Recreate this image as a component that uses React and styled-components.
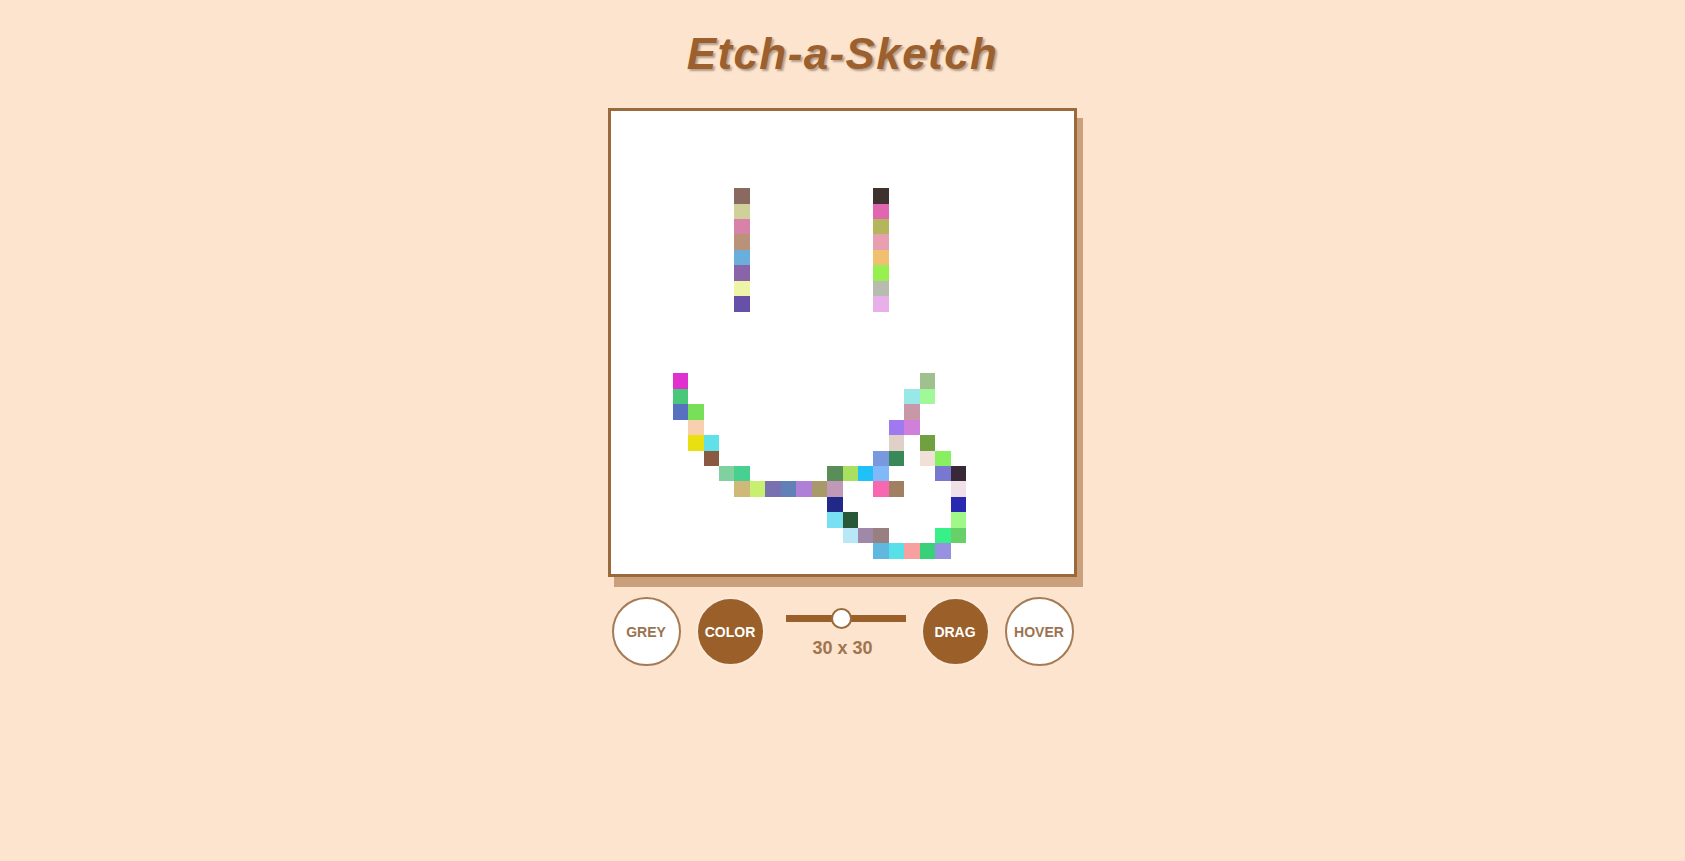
import React, { useState } from 'react'
import styled, { createGlobalStyle } from 'styled-components'

const GlobalStyle = createGlobalStyle`
  html, body {
    margin: 0;
    padding: 0;
    background: #fce4cf;
    font-family: "Liberation Sans", Arial, sans-serif;
  }
`

const Page = styled.div`
  display: flex;
  flex-direction: column;
  align-items: center;
  min-height: 100vh;
`

const Title = styled.h1`
  margin: 30px 0 30px;
  font-size: 44px;
  line-height: 48px;
  letter-spacing: 1.4px;
  font-style: italic;
  font-weight: bold;
  color: #9b602d;
  text-shadow: 2px 2px 2px rgba(70, 55, 40, 0.4);
`

const Board = styled.div`
  display: grid;
  grid-template-columns: repeat(${(p) => p.$size}, 1fr);
  grid-template-rows: repeat(${(p) => p.$size}, 1fr);
  width: 463px;
  height: 463px;
  background: #fff;
  border: 3px solid #9b6a3c;
  box-shadow: 6px 10px 0 #c9a07b;
`

const Cell = styled.div`
  background: ${(p) => p.$color || 'transparent'};
`

const Controls = styled.div`
  display: flex;
  align-items: center;
  gap: 15px;
  margin-top: 20px;
`

const RoundButton = styled.button`
  width: 69px;
  height: 69px;
  border-radius: 50%;
  padding: 0;
  font-family: inherit;
  font-size: 14px;
  font-weight: bold;
  cursor: pointer;
  border: 2px solid ${(p) => (p.$active ? '#fbe9da' : '#a57b55')};
  background: ${(p) => (p.$active ? '#9b5f2a' : '#fff')};
  color: ${(p) => (p.$active ? '#fff' : '#9b7350')};
`

const SliderGroup = styled.div`
  display: flex;
  flex-direction: column;
  align-items: center;
  gap: 16px;
  padding-top: 10px;
  margin-left: 6px;
  width: 120px;
`

const Range = styled.input`
  -webkit-appearance: none;
  appearance: none;
  width: 120px;
  height: 7px;
  margin: 0;
  background: #9b5f2a;
  outline: none;

  &::-webkit-slider-thumb {
    -webkit-appearance: none;
    appearance: none;
    width: 21px;
    height: 21px;
    border-radius: 50%;
    background: #fff;
    border: 2px solid #9b6a3c;
    box-sizing: border-box;
    cursor: pointer;
  }
`

const SizeLabel = styled.span`
  margin-right: 6px;
  font-size: 18px;
  font-weight: bold;
  color: #a0744c;
`

const PAINTED = [
  // left eye
  [8, 5, '#8a6a60'], [8, 6, '#cfd09a'], [8, 7, '#d882aa'], [8, 8, '#b8937a'],
  [8, 9, '#6aaedc'], [8, 10, '#8a64a8'], [8, 11, '#eef5a8'], [8, 12, '#6650a8'],
  // right eye
  [17, 5, '#3e322e'], [17, 6, '#e066b0'], [17, 7, '#b5b55e'], [17, 8, '#e8a0b0'],
  [17, 9, '#f0c070'], [17, 10, '#98f050'], [17, 11, '#b8bcb0'], [17, 12, '#e8b0e8'],
  // mouth
  [4, 17, '#e030d0'], [4, 18, '#48c878'], [4, 19, '#5870c0'],
  [5, 19, '#78e058'], [5, 20, '#f8d0b0'], [5, 21, '#e8e010'],
  [6, 21, '#60e0e8'], [6, 22, '#8a5a40'],
  [7, 23, '#80d0a0'], [8, 23, '#48d090'], [8, 24, '#d0b878'],
  [9, 24, '#c8f070'], [10, 24, '#7870b0'], [11, 24, '#6080b8'],
  [12, 24, '#b080d8'], [13, 24, '#a89a68'],
  [14, 23, '#5a8e58'], [14, 24, '#c098b8'], [14, 25, '#202888'], [14, 26, '#78e0f0'],
  [15, 23, '#a8e060'], [15, 26, '#285838'], [15, 27, '#b8e8f8'],
  [16, 23, '#20c0f8'], [16, 27, '#a088a8'],
  [17, 22, '#7898e0'], [17, 23, '#80b8f8'], [17, 24, '#f868b0'],
  [17, 27, '#988080'], [17, 28, '#60b8e0'],
  [18, 20, '#a078f0'], [18, 21, '#e0d0c8'], [18, 22, '#388858'],
  [18, 24, '#a08060'], [18, 28, '#58e0e8'],
  [19, 18, '#98e8e8'], [19, 19, '#c898a8'], [19, 20, '#d080d8'], [19, 28, '#f8a0a0'],
  [20, 17, '#a0c090'], [20, 18, '#a0f898'], [20, 21, '#70a040'],
  [20, 22, '#f0e0d8'], [20, 28, '#38d078'],
  [21, 22, '#88f060'], [21, 23, '#7878d0'], [21, 27, '#38f088'], [21, 28, '#9890e0'],
  [22, 23, '#382838'], [22, 24, '#f0e0e8'], [22, 25, '#2828b0'],
  [22, 26, '#a0f888'], [22, 27, '#68d068'],
]

const GRID = 30
const paintMap = new Map(PAINTED.map(([c, r, color]) => [r * GRID + c, color]))

const App = () => {
  const [size, setSize] = useState(30)

  return (
    <Page>
      <GlobalStyle />
      <Title>Etch-a-Sketch</Title>
      <Board $size={GRID}>
        {Array.from({ length: GRID * GRID }, (_, i) => (
          <Cell key={i} $color={paintMap.get(i)} />
        ))}
      </Board>
      <Controls>
        <RoundButton>GREY</RoundButton>
        <RoundButton $active>COLOR</RoundButton>
        <SliderGroup>
          <Range
            type="range"
            min="1"
            max="64"
            value={size}
            onChange={(e) => setSize(Number(e.target.value))}
          />
          <SizeLabel>
            {size} x {size}
          </SizeLabel>
        </SliderGroup>
        <RoundButton $active>DRAG</RoundButton>
        <RoundButton>HOVER</RoundButton>
      </Controls>
    </Page>
  )
}

export default App
